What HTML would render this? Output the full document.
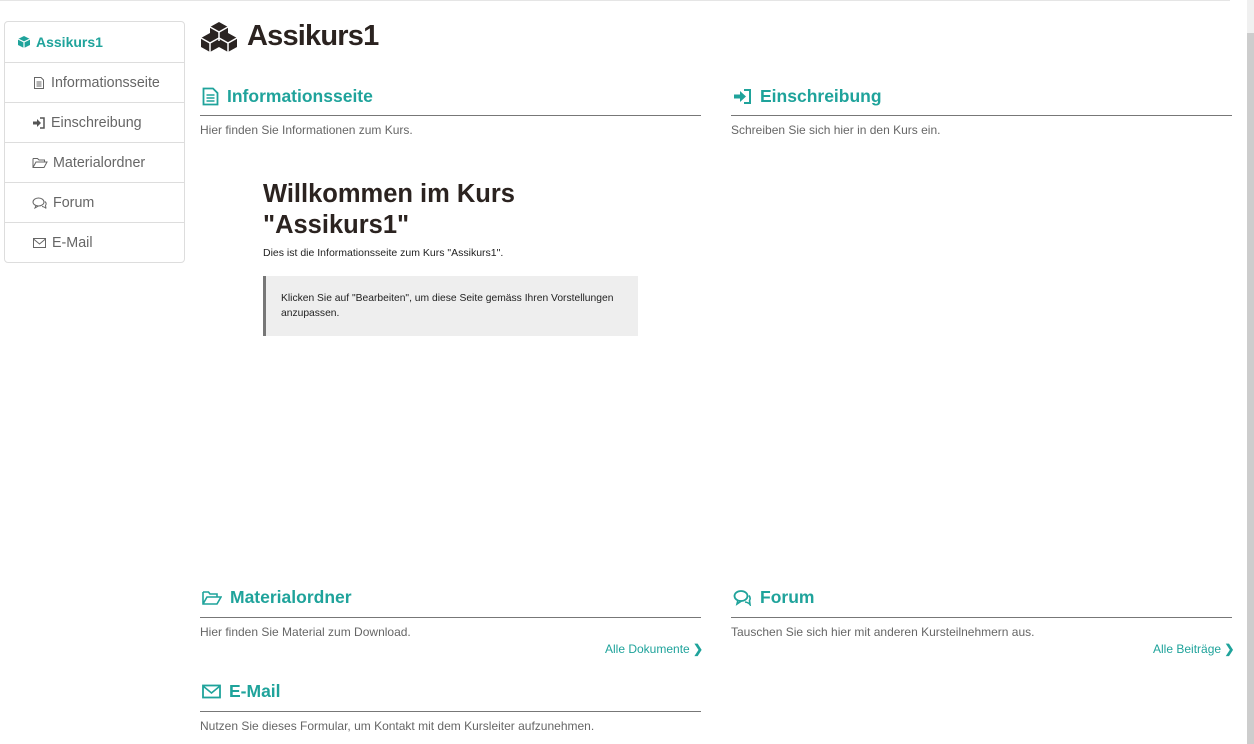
<!DOCTYPE html>
<html><head><meta charset="utf-8"><style>
*{box-sizing:border-box;margin:0;padding:0}
body{width:1254px;height:744px;overflow:hidden;background:#fff;font-family:"Liberation Sans",sans-serif;color:#333;position:relative}
.a{position:absolute}
.side{left:4px;top:21px;width:181px;height:242px;border:1px solid #ddd;border-radius:4px}
.side div{height:40px;border-bottom:1px solid #ddd;font-size:14.3px;color:#666;display:flex;align-items:center;padding-left:27px}
.side div:last-child{border-bottom:none}
.side svg{margin-right:5px}
h2{position:absolute;font-size:17.5px;font-weight:bold;color:#1fa39b;display:flex;align-items:center}
h2 svg{margin-right:8px}
.hr{position:absolute;height:1px;background:#777}
.p{position:absolute;font-size:12px;color:#666}
.lnk{position:absolute;font-size:12px;color:#1fa39b}
</style></head><body>
<div class="a" style="left:0;top:0;width:1230px;height:1px;background:#e5e5e5"></div>
<div class="a" style="left:1247px;top:0;width:7px;height:33px;background:#f0f0f0"></div>
<div class="a" style="left:1247px;top:33px;width:7px;height:711px;background:#cdcdcd"></div>

<div class="a side">
<div style="padding-left:12px;color:#1fa39b;font-weight:bold;font-size:14px;height:41px"><svg width="14" height="14" viewBox="0 0 14 14"><path d="M7 1L13 4V10L7 13L1 10V4Z" fill="#1fa39b"/><path d="M1 4L7 7L13 4M7 7V13" stroke="#fff" stroke-width="1.2" fill="none"/></svg>Assikurs1</div>
<div><svg width="14" height="14" viewBox="0 0 14 14"><path d="M2.5 1.5H9L11.5 4V12.5H2.5Z" stroke="#666" fill="none"/><path d="M4.5 6H9.5M4.5 8H9.5M4.5 10H9.5" stroke="#666"/></svg>Informationsseite</div>
<div><svg width="14" height="14" viewBox="0 0 14 14"><path d="M1 5.5H5V3L9 7L5 11V8.5H1Z" fill="#555"/><path d="M8 2H12V12H8" stroke="#555" stroke-width="1.5" fill="none"/></svg>Einschreibung</div>
<div><svg width="16" height="14" viewBox="0 0 16 14"><path d="M1 2.5H5.5L7 4H12.5V6M1 2.5V11.5H12L15 6H4L1 11.5" stroke="#666" fill="none"/></svg>Materialordner</div>
<div><svg width="16" height="14" viewBox="0 0 16 14"><ellipse cx="6.5" cy="6" rx="5.5" ry="4" stroke="#666" fill="none"/><path d="M4 9.5L3 12L6.5 10M10 10.5Q13 11 14 12.5L13.5 9.5Q15 7.5 13 5.5" stroke="#666" fill="none"/></svg>Forum</div>
<div><svg width="15" height="14" viewBox="0 0 15 14"><rect x="1.5" y="2.5" width="12" height="9" stroke="#666" fill="none"/><path d="M1.5 3L7.5 8L13.5 3" stroke="#666" fill="none"/></svg>E-Mail</div>
</div>

<div class="a" style="left:200px;top:20px;display:flex;align-items:center">
<svg width="38" height="32" viewBox="0 0 38 32"><g fill="#2a2422"><path d="M10 6L19 1L28 6V15L19 20L10 15Z"/><path d="M1 17L10 12L19 17V26L10 31L1 26Z"/><path d="M19 17L28 12L37 17V26L28 31L19 26Z"/></g><g stroke="#fff" stroke-width="1.5" fill="none"><path d="M10 6L19 11L28 6M19 11V20"/><path d="M1 17L10 22L19 17M10 22V31"/><path d="M19 17L28 22L37 17M28 22V31"/></g></svg>
<span style="font-size:29px;font-weight:bold;color:#2b2320;margin-left:9px;letter-spacing:-0.8px">Assikurs1</span></div>

<h2 style="left:202px;top:86px"><svg width="17" height="19" viewBox="0 0 17 19"><path d="M1.5 1.5H11L15.5 6V17.5H1.5Z" stroke="#1fa39b" stroke-width="1.8" fill="none"/><path d="M4.5 8H12.5M4.5 11H12.5M4.5 14H12.5" stroke="#1fa39b" stroke-width="1.5"/></svg>Informationsseite</h2>
<div class="hr" style="left:200px;top:115px;width:501px"></div>
<div class="p" style="left:200px;top:123px">Hier finden Sie Informationen zum Kurs.</div>

<h2 style="left:733px;top:86px"><svg width="19" height="17" viewBox="0 0 19 17"><path d="M1 6.5H7V3L13 8.5L7 14V10.5H1Z" fill="#1fa39b"/><path d="M11 2H17V15H11" stroke="#1fa39b" stroke-width="2" fill="none"/></svg>Einschreibung</h2>
<div class="hr" style="left:731px;top:115px;width:501px"></div>
<div class="p" style="left:731px;top:123px">Schreiben Sie sich hier in den Kurs ein.</div>

<div class="a" style="left:263px;top:179px;font-size:25.5px;font-weight:bold;color:#2b2320;line-height:31px">Willkommen im Kurs<br>"Assikurs1"</div>
<div class="a" style="left:263px;top:247px;font-size:10.5px;color:#222">Dies ist die Informationsseite zum Kurs "Assikurs1".</div>
<div class="a" style="left:263px;top:276px;width:375px;height:60px;background:#eee;border-left:3px solid #777;padding:15px 0 0 15px;font-size:10.3px;line-height:15px;color:#222">Klicken Sie auf "Bearbeiten", um diese Seite gemäss Ihren Vorstellungen<br>anzupassen.</div>

<h2 style="left:202px;top:587px"><svg width="20" height="16" viewBox="0 0 20 16"><path d="M1 2H6.5L8 4H15V7M1 2V14H15L19 7H5L1 14" stroke="#1fa39b" stroke-width="1.6" fill="none"/></svg>Materialordner</h2>
<div class="hr" style="left:200px;top:617px;width:501px"></div>
<div class="p" style="left:200px;top:625px">Hier finden Sie Material zum Download.</div>
<div class="lnk" style="left:605px;top:642px">Alle Dokumente <b>❯</b></div>

<h2 style="left:733px;top:587px"><svg width="19" height="17" viewBox="0 0 19 17"><ellipse cx="8" cy="7" rx="6.5" ry="5" stroke="#1fa39b" stroke-width="1.8" fill="none"/><path d="M5 11L4 15L8.5 12M12 13Q15.5 13.5 17 15.5L16.5 11.5Q18 9 16 6.5" stroke="#1fa39b" stroke-width="1.6" fill="none"/></svg>Forum</h2>
<div class="hr" style="left:731px;top:617px;width:501px"></div>
<div class="p" style="left:731px;top:625px">Tauschen Sie sich hier mit anderen Kursteilnehmern aus.</div>
<div class="lnk" style="left:1153px;top:642px">Alle Beiträge <b>❯</b></div>

<h2 style="left:202px;top:681px"><svg width="19" height="15" viewBox="0 0 19 15"><rect x="1" y="1.5" width="17" height="12" stroke="#1fa39b" stroke-width="1.8" fill="none"/><path d="M1 2L9.5 9L18 2" stroke="#1fa39b" stroke-width="1.6" fill="none"/></svg>E-Mail</h2>
<div class="hr" style="left:200px;top:711px;width:501px"></div>
<div class="p" style="left:200px;top:719px">Nutzen Sie dieses Formular, um Kontakt mit dem Kursleiter aufzunehmen.</div>
</body></html>
